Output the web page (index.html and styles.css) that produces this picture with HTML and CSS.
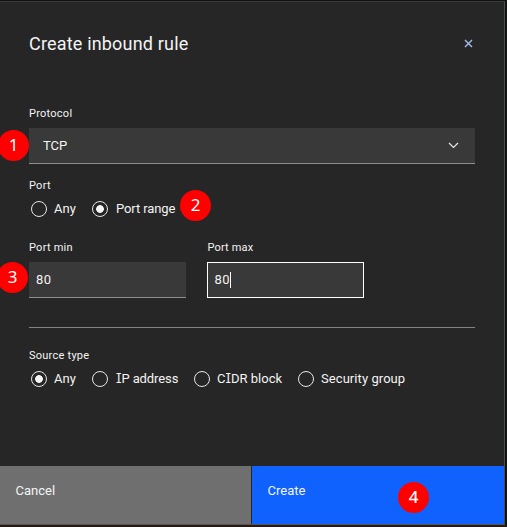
FILE: index.html
```html
<!DOCTYPE html>
<html lang="en">
<head>
<meta charset="utf-8">
<title>Create inbound rule</title>
<link rel="stylesheet" href="styles.css">
</head>
<body>
<div class="modal">
  <header class="header">
    <h1 class="title"><span class="t-title">Create inbound rule</span></h1>
    <svg class="close" viewBox="0 0 9 9"><path d="M1 1L8 8M8 1L1 8"/></svg>
  </header>
  <main class="form">
    <div class="label">Protocol</div>
    <div class="select"><span>TCP</span>
      <svg class="chevron" viewBox="0 0 11 7"><path d="M1 1L5.5 5.5L10 1"/></svg>
      <span class="badge b1">1</span>
    </div>
    <div class="label port-label">Port</div>
    <div class="radios">
      <div class="radio w-any"><i class="dot"></i><span class="text">Any</span></div>
      <div class="radio w-range"><i class="dot on"></i><span class="text t-range">Port range</span></div>
      <span class="badge b2">2</span>
    </div>
    <div class="ports">
      <div class="field"><div class="label">Port min</div><div class="input">80</div><span class="badge b3">3</span></div>
      <div class="field"><div class="label t-max">Port max</div><div class="input focus">80<i class="caret"></i></div></div>
    </div>
    <div class="rule"></div>
    <div class="label source-label">Source type</div>
    <div class="radios">
      <div class="radio w-any"><i class="dot on"></i><span class="text">Any</span></div>
      <div class="radio w-ip"><i class="dot"></i><span class="text t-ip"><span class="slab">I</span>P address</span></div>
      <div class="radio w-cidr"><i class="dot"></i><span class="text">C<span class="slab">I</span>DR block</span></div>
      <div class="radio"><i class="dot"></i><span class="text t-sec">Security group</span></div>
    </div>
  </main>
  <footer class="actions">
    <div class="btn cancel">Cancel</div>
    <div class="btn create">Create<span class="badge b4">4</span></div>
  </footer>
</div>
</body>
</html>
```
FILE: styles.css
```css
* { box-sizing: border-box; }
html, body { height: 100%; }
body {
  margin: 0;
  overflow: hidden;
  background: linear-gradient(to top, #241a16 2px, #111212 2px);
  font-family: Roboto, "Liberation Sans", sans-serif;
  font-size: 13px;
  color: #f4f4f4;
}
.modal {
  display: flex;
  flex-direction: column;
  width: 505px;
  height: 524px;
  margin-top: 1px;
  background: #262626;
  border-top: 1px solid #393939;
  border-right: 1px solid #4c4c4c;
  border-bottom: 1px solid #5b5450;
}
.header {
  display: flex;
  justify-content: space-between;
  align-items: center;
  height: 84px;
  padding: 0 31px 0 29px;
}
.title { margin: 0; font-size: 18px; font-weight: 400; line-height: 24px; }
.t-title { letter-spacing: .18px; }
.close { width: 9px; height: 9px; margin-top: -1px; fill: none; stroke: #a0b8e2; stroke-width: 1.5; }
.form { flex: 1; padding: 20px 29px 0; }
.label { height: 16px; line-height: 16px; font-size: 11px; letter-spacing: .25px; white-space: nowrap; }
.select {
  position: relative;
  display: flex;
  justify-content: space-between;
  align-items: center;
  height: 36px;
  margin-top: 6px;
  padding: 0 16px 0 14px;
  background: #393939;
  border-bottom: 1px solid #8d8d8d;
}
.chevron { width: 11px; height: 7px; fill: none; stroke: #e8e8e8; stroke-width: 1.2; }
.port-label { margin-top: 14px; }
.radios { position: relative; display: flex; height: 20px; margin-top: 5px; padding-left: 2px; }
.radio { display: flex; align-items: center; gap: 7px; white-space: nowrap; }
.text { padding-bottom: 2px; }
.t-range, .t-ip { padding-left: 1px; letter-spacing: -.1px; }
.t-sec { letter-spacing: .07px; }
.w-any { width: 61px; }
.w-ip { width: 102px; }
.w-cidr { width: 104px; }
.dot { flex: none; width: 16px; height: 16px; border: 1px solid #e6e6e6; border-radius: 50%; }
.on { background: radial-gradient(circle, #f4f4f4 3.5px, transparent 4.2px); }
.ports { display: flex; gap: 21px; margin-top: 21px; }
.field { position: relative; width: 157px; }
.t-max { padding-left: .5px; letter-spacing: .15px; }
.input {
  display: flex;
  align-items: center;
  height: 36px;
  margin-top: 6px;
  padding-left: 7px;
  background: #393939;
  border-bottom: 1px solid #8d8d8d;
  letter-spacing: .5px;
}
.focus { padding: 0 6.5px 1px; border: 1px solid #fff; }
.caret { width: 1px; height: 16px; margin-left: -.5px; background: #fff; }
.rule { height: 1px; margin-top: 29px; background: #7d8487; }
.source-label { margin-top: 20px; }
.radios .slab { font-family: Inter, sans-serif; font-feature-settings: "cv08" 1; font-size: 12.5px; line-height: 1; }
.actions { display: flex; gap: 1px; height: 58px; }
.btn { position: relative; padding: 17px 15.5px 0; line-height: 16px; }
.cancel { width: 251px; background: #6f6f6f; }
.create { flex: 1; background: #0f62fe; }
.badge {
  position: absolute;
  width: 31px;
  height: 31px;
  border-radius: 50%;
  background: #f00;
  color: #fff;
  font: 17px/30px "Noto Sans", sans-serif;
  text-align: center;
}
.b1 { left: -31px; top: 2px; }
.b2 { left: 151px; top: -9px; }
.b3 { left: -32px; top: 22px; }
.b4 { left: 146px; top: 16px; font-weight: 500; }
```
